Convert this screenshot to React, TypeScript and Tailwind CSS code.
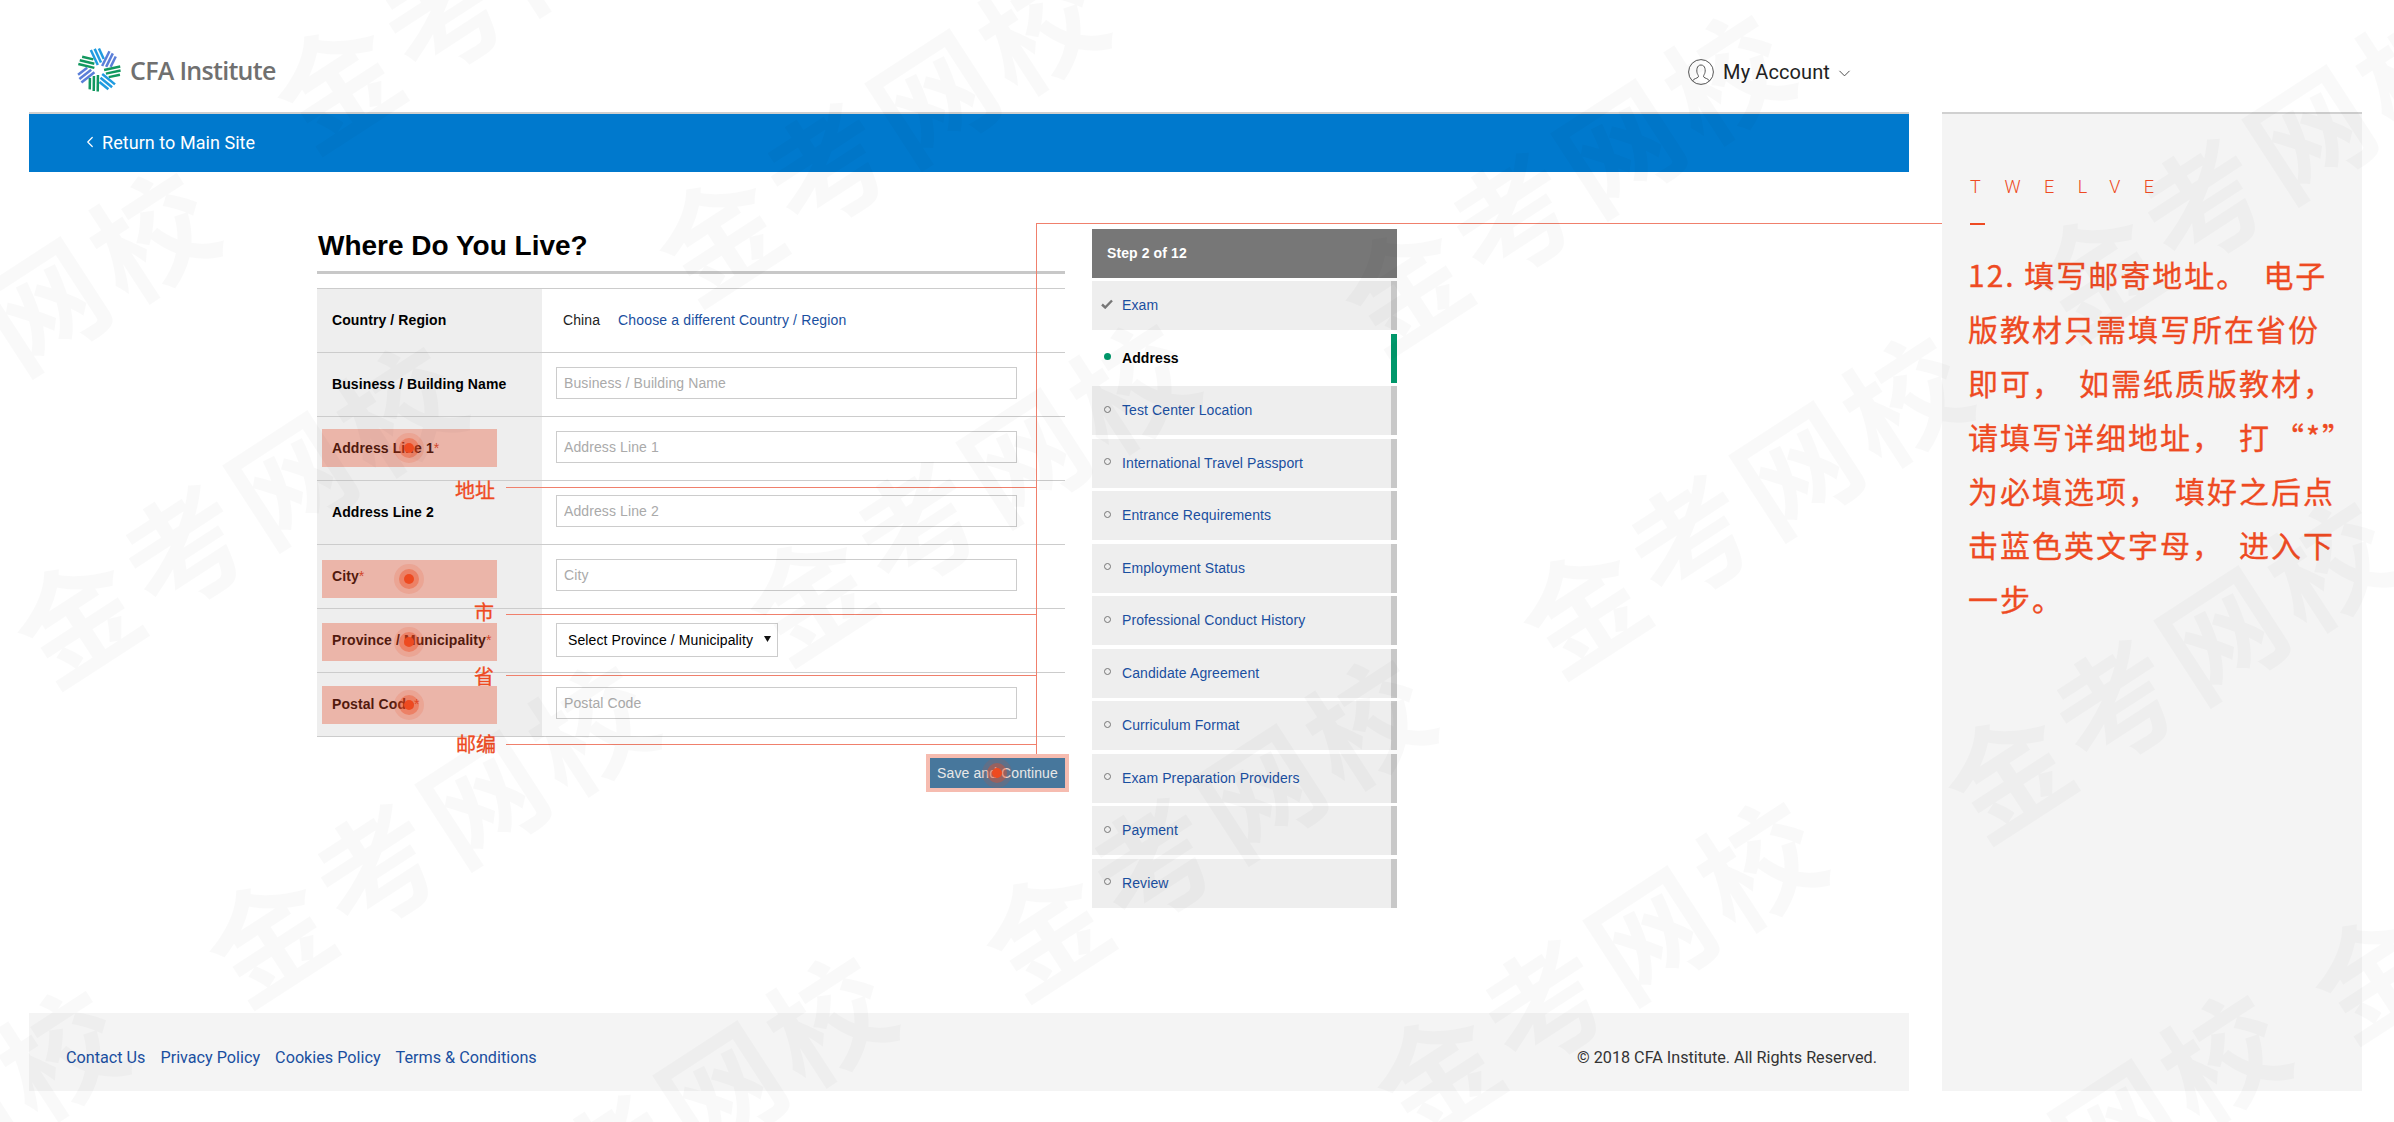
import { ChevronDown, ChevronLeft } from "lucide-react";

const cjk = "font-['Noto_Sans_CJK_SC','Noto_Sans',sans-serif]";
const arial = "font-['Liberation_Sans',Arial,sans-serif]";
const roboto = "font-['Roboto',sans-serif]";

const steps = [
  "Exam",
  "Address",
  "Test Center Location",
  "International Travel Passport",
  "Entrance Requirements",
  "Employment Status",
  "Professional Conduct History",
  "Candidate Agreement",
  "Curriculum Format",
  "Exam Preparation Providers",
  "Payment",
  "Review",
];

// each panel line is text pieces with a fixed gap between them
const panelLines = [
  ["12. 填写邮寄地址。", "电子"],
  ["版教材只需填写所在省份"],
  ["即可，", "如需纸质版教材，"],
  ["请填写详细地址，", "打", "“*”"],
  ["为必填选项，", "填好之后点"],
  ["击蓝色英文字母，", "进入下"],
  ["一步。"],
];

// centres of the diagonal watermark stamps
const stamps = [
  [-9, 333],
  [238, 507],
  [498, -28],
  [880, 125],
  [971, 484],
  [430, 826],
  [1207, 820],
  [668, 1117],
  [-100, 1151],
  [1566, 175],
  [1744, 497],
  [2169, 662],
  [1598, 962],
  [2062, 1155],
  [2257, 161],
  [2536, 862],
];

const highlights = [429, 560, 623, 686];
const dots = [
  [409, 448],
  [409, 579],
  [409, 642],
  [409, 705],
  [997, 773],
];
const notes = [
  { text: "地址", x: 455, y: 475, line: 487 },
  { text: "市", x: 474, y: 597, line: 614 },
  { text: "省", x: 474, y: 661, line: 675 },
  { text: "邮编", x: 456, y: 729, line: 744 },
];

function Logo() {
  const colors = ["#1f9be0", "#5b7fd8", "#12985f", "#1f9be0", "#12985f", "#5b7fd8", "#12985f"];
  return (
    <svg width="44" height="44" viewBox="-22 -22 44 44">
      {colors.map((c, i) => (
        <g key={i} transform={`rotate(${(i * 360) / 7 - 25})`} stroke={c} strokeWidth="2.5">
          <line x1="1" y1="-5" x2="1" y2="-21.5" />
          <line x1="5" y1="-6" x2="5" y2="-21" />
          <line x1="9" y1="-8" x2="9" y2="-19.5" />
        </g>
      ))}
    </svg>
  );
}

function UserIcon() {
  return (
    <svg width="26" height="26" viewBox="0 0 26 26" fill="none" stroke="#555" strokeWidth="1">
      <circle cx="13" cy="13" r="12.4" />
      <path d="M4.5 22c1-2.5 4.500-2.500 5.800-4 .5-1-.3-2-1-3.500-1-2.500-.8-8.500 3.700-8.500s4.700 6 3.700 8.500c-.7 1.500-1.500 2.500-1 3.500 1.300 1.500 4.800 1.500 5.800 4" />
    </svg>
  );
}

function Row({ label, required, children }: { label: string; required?: boolean; children: React.ReactNode }) {
  return (
    <div className="flex h-16 border-t border-[#cccccc]">
      <div className="flex w-[225px] items-center bg-[#eeeeee] pl-[15px] text-[14px] font-bold text-black">
        {label}
        {required && <span className="font-normal text-[#c8442c]">*</span>}
      </div>
      <div className="flex flex-1 items-start pl-[14px] pt-[14px]">{children}</div>
    </div>
  );
}

function TextInput({ placeholder }: { placeholder: string }) {
  return (
    <input
      type="text"
      placeholder={placeholder}
      className="h-8 w-[461px] border border-[#cccccc] bg-white px-[7px] text-[14px] outline-none placeholder:text-[#aaaaaa]"
    />
  );
}

function StepIcon({ index }: { index: number }) {
  if (index === 0) {
    return (
      <svg width="12" height="10" viewBox="0 0 12 10" className="mb-[3px]" fill="none" stroke="#777" strokeWidth="2.4">
        <path d="M1 5.500 4.200 8.500 11 1.500" />
      </svg>
    );
  }
  if (index === 1) return <span className="mb-[3px] h-[7px] w-[7px] rounded-full bg-[#00976a]" />;
  return <span className="mb-[3px] h-[7px] w-[7px] rounded-full border border-[#777777]" />;
}

function Sidebar() {
  return (
    <div className="w-[305px]">
      <div className="mb-[3px] flex h-[49px] items-center bg-[#777777] pl-[15px] text-[14px] font-bold text-white">
        Step 2 of 12
      </div>
      <div className="flex flex-col gap-[3.5px]">
        {steps.map((s, i) => (
          <div
            key={s}
            className={
              i === 1
                ? "flex h-[49px] items-center border-r-[6px] border-[#00976a] bg-white"
                : "flex h-[49px] items-center border-r-[6px] border-[#c8c8c8] bg-[#eeeeee]"
            }
          >
            <div className="flex w-[30px] justify-center">
              <StepIcon index={i} />
            </div>
            <span className={i === 1 ? "text-[14px] font-bold text-black" : "text-[14px] text-[#1a4fa0]"}>{s}</span>
          </div>
        ))}
      </div>
    </div>
  );
}

function Annotations() {
  return (
    <>
      {highlights.map((y) => (
        <div key={y} className="absolute left-[322px] h-[38px] w-[175px] bg-[#e44b28]/35" style={{ top: y }} />
      ))}
      {dots.map(([x, y]) => (
        <div key={x + "-" + y} className="absolute" style={{ left: x - 15, top: y - 15 }}>
          <div className="flex h-[30px] w-[30px] items-center justify-center rounded-full bg-[#ee4a20]/15">
            <div className="flex h-5 w-5 items-center justify-center rounded-full bg-[#ee4a20]/40">
              <div className="h-[10px] w-[10px] rounded-full bg-[#ee4a20]" />
            </div>
          </div>
        </div>
      ))}
      {notes.map((n) => (
        <div key={n.text}>
          <div className={`absolute text-[20px] leading-[30px] text-[#ee4a22] [-webkit-text-stroke:0.3px] ${cjk}`} style={{ left: n.x, top: n.y }}>
            {n.text}
          </div>
          <div className="absolute left-[506px] h-px w-[530px] bg-[#f0806c]" style={{ top: n.line }} />
        </div>
      ))}
      <div className="absolute left-[1036px] top-[223px] h-[531px] w-px bg-[#f0806c]" />
      <div className="absolute left-[1036px] top-[223px] h-px w-[906px] bg-[#f0806c]" />
    </>
  );
}

function Watermark() {
  return (
    <div className="pointer-events-none absolute inset-0 overflow-hidden">
      {stamps.map(([x, y]) => (
        <div
          key={x + "-" + y}
          className={`absolute -translate-x-1/2 -translate-y-1/2 rotate-[-33deg] whitespace-nowrap text-[120px] font-bold leading-none tracking-[8px] text-black/[0.025] ${cjk}`}
          style={{ left: x, top: y }}
        >
          金考网校
        </div>
      ))}
    </div>
  );
}

export default function App() {
  return (
    <div className={`relative flex h-[1122px] w-[2394px] overflow-hidden bg-white pl-[29px] ${arial}`}>
      <div className="flex h-[1091px] w-[1880px] flex-col">
        {/* Header */}
        <header className="flex h-[112px] shrink-0 items-start justify-between pl-[48px] pr-[55px]">
          <div className="mt-[48px] flex items-center gap-[9px]">
            <Logo />
            <span className="mt-[2px] font-['Open_Sans',sans-serif] text-[25px] font-semibold tracking-[-0.7px] text-[#707070]">
              CFA Institute
            </span>
          </div>
          <div className={`mt-[59px] flex items-center text-[20px] leading-[26px] text-[#222222] ${roboto}`}>
            <UserIcon />
            <span className="ml-[9px] tracking-[0.1px]">My Account</span>
            <ChevronDown size={19} strokeWidth={1.2} className="ml-[5px] mt-[2px] text-[#444444]" />
          </div>
        </header>

        <div className={`flex h-[60px] shrink-0 items-center border-t-2 border-[#d0d0d0] bg-[#0079cd] pb-[2px] pl-[52px] text-[18px] text-white ${roboto}`}>
          <ChevronLeft size={18} strokeWidth={1.6} />
          <span className="ml-[3px] tracking-[0.05px]">Return to Main Site</span>
        </div>

        {/* Form and steps */}
        <main className="flex flex-1 pl-[288px] pt-[57px] tracking-[0.1px]">
          <div className="w-[748px]">
            <h1 className="ml-[1px] mt-[-4px] h-[42px] text-[28px] font-bold leading-[42px] tracking-normal text-black">Where Do You Live?</h1>
            <div className="mt-[4px] h-[3px] bg-[#c8c8c8]" />
            <div className="mt-[14px] border-b border-[#cccccc]">
              <Row label="Country / Region">
                <div className="mt-[7px] flex items-center gap-[18px] text-[14px]">
                  <span className="ml-[7px] text-[#222222]">China</span>
                  <a className="tracking-[0.15px] text-[#1a4fa0]">Choose a different Country / Region</a>
                </div>
              </Row>
              <Row label="Business / Building Name">
                <TextInput placeholder="Business / Building Name" />
              </Row>
              <Row label="Address Line 1" required>
                <TextInput placeholder="Address Line 1" />
              </Row>
              <Row label="Address Line 2">
                <TextInput placeholder="Address Line 2" />
              </Row>
              <Row label="City" required>
                <TextInput placeholder="City" />
              </Row>
              <Row label="Province / Municipality" required>
                <div className="relative">
                  <select className="h-[34px] w-[222px] appearance-none border border-[#cccccc] bg-white px-[11px] text-[14px] text-black">
                    <option>Select Province / Municipality</option>
                  </select>
                  <svg width="7" height="6" viewBox="0 0 7 6" className="absolute right-[7px] top-[13px]">
                    <path d="M0 0h7L3.500 6z" fill="#111" />
                  </svg>
                </div>
              </Row>
              <Row label="Postal Code" required>
                <TextInput placeholder="Postal Code" />
              </Row>
            </div>
            <div className="mt-[21px] flex justify-end">
              <button className="h-[30px] w-[135px] bg-[#47779c] text-[14px] text-[#e8e8e8] shadow-[0_0_0_4px_#f6bcb0]">
                Save and Continue
              </button>
            </div>
          </div>
          <div className="ml-[27px]">
            <Sidebar />
          </div>
        </main>

        {/* Footer */}
        <footer className={`flex h-[78px] shrink-0 items-center justify-between bg-[#f4f4f4] pl-[37px] pr-[32px] pt-[12px] text-[16.2px] ${roboto}`}>
          <div className="flex gap-[15px] text-[#1a4fa0]">
            <a>Contact Us</a>
            <a>Privacy Policy</a>
            <a>Cookies Policy</a>
            <a>Terms &amp; Conditions</a>
          </div>
          <span className="text-[#333333]">© 2018 CFA Institute. All Rights Reserved.</span>
        </footer>
      </div>

      {/* Explanation panel */}
      <aside className="ml-[33px] mt-[112px] h-[979px] w-[420px] border-t-2 border-[#d0d0d0] bg-[#f4f4f4] pl-[26px] text-[#ee4a22]">
        <div className={`ml-[2px] mt-[62px] text-[18px] font-light leading-[22px] tracking-[23.5px] ${roboto}`}>TWELVE</div>
        <div className="ml-[2px] mt-[25px] h-[2px] w-[15px] bg-[#ee4a22]" />
        <div className={`mt-[22px] whitespace-pre text-[30px] leading-[54px] tracking-[2px] [-webkit-text-stroke:0.3px] ${cjk}`}>
          {panelLines.map((pieces) => (
            <div key={pieces[0]} className="flex gap-[15px]">
              {pieces.map((p) => (
                <span key={p} className={p === "“*”" ? "-ml-[12px]" : ""}>
                  {p}
                </span>
              ))}
            </div>
          ))}
        </div>
      </aside>

      <Annotations />
      <Watermark />
    </div>
  );
}
